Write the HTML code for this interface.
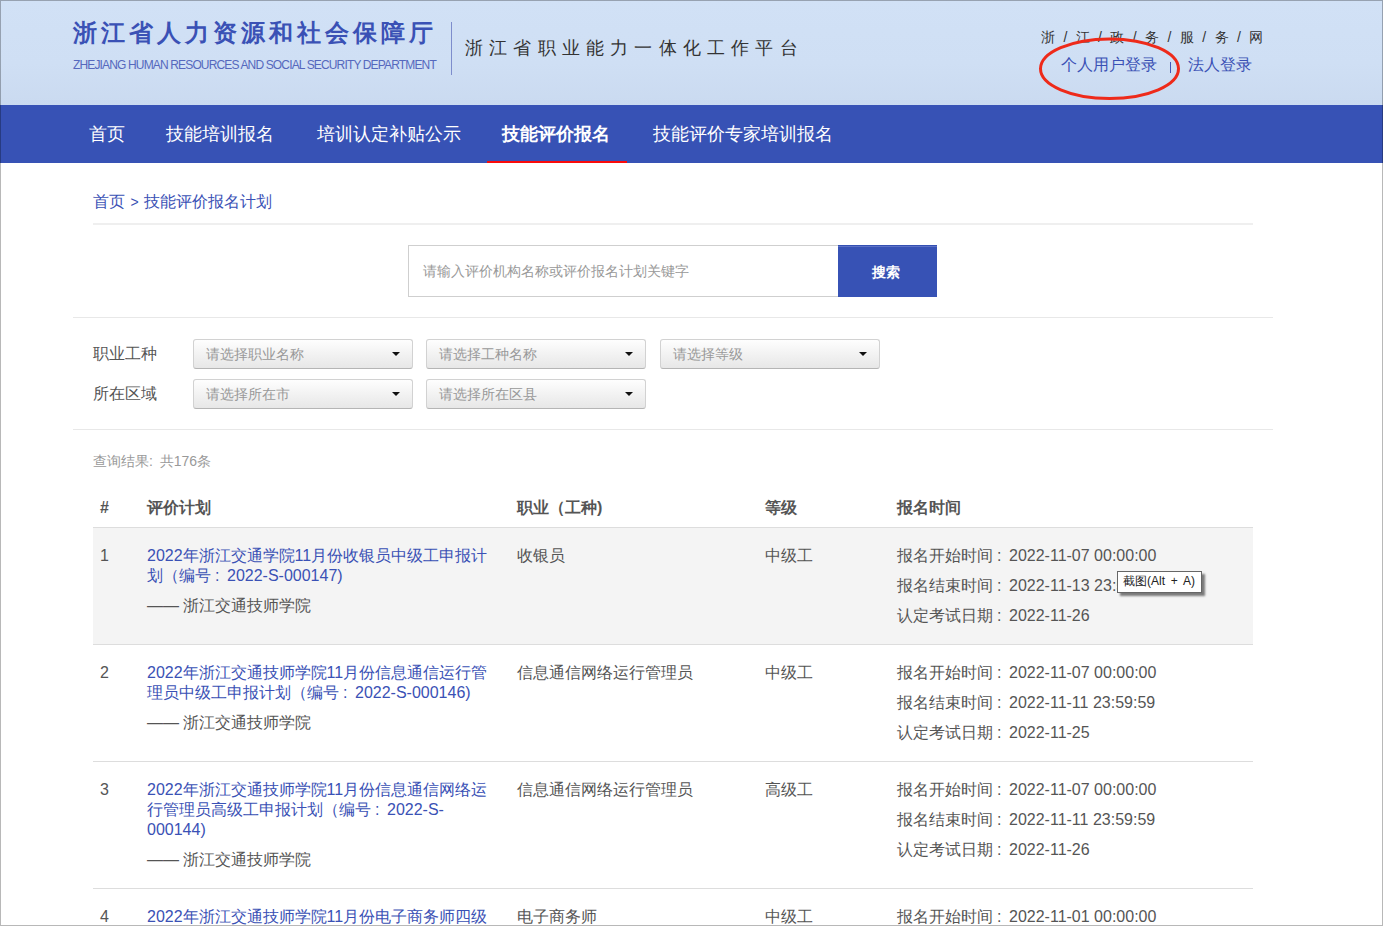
<!DOCTYPE html>
<html><head><meta charset="utf-8">
<style>
*{margin:0;padding:0;box-sizing:border-box}
html,body{width:1383px;height:926px;overflow:hidden;background:#fff}
body{font-family:"Liberation Sans",sans-serif;position:relative;color:#555}
.a{position:absolute;white-space:nowrap}
#frame{position:absolute;left:0;top:0;width:1383px;height:926px;border:1px solid rgba(0,0,0,.28);z-index:50;pointer-events:none}
#hdr{position:absolute;left:0;top:0;width:1383px;height:105px;background:linear-gradient(180deg,#d1e1f6 0%,#cfdff4 60%,#cadaf0 100%)}
#title{left:73px;top:18px;font-size:24px;font-weight:bold;letter-spacing:4px;color:#3a51b5;line-height:30px}
#eng{left:73px;top:58px;font-size:12px;letter-spacing:-0.85px;color:#5568bd;line-height:14px}
#vline{left:451px;top:22px;width:1px;height:53px;background:#7d8dcc}
#plat{left:465px;top:37px;font-size:18px;letter-spacing:6.2px;color:#333;line-height:22px}
#gov{left:1041px;top:28px;font-size:14px;color:#333;line-height:18px;letter-spacing:2.26px}
.login{top:55px;font-size:16px;color:#3a51b5;line-height:20px}
#nav{position:absolute;left:0;top:105px;width:1383px;height:58px;background:#3752b5}
.ni{position:absolute;top:13px;font-size:18px;color:#fff;line-height:32px}
#act{font-weight:bold}
#uline{left:487px;top:161px;width:140px;height:2px;background:#fa0a0a}
#bc{left:93px;top:192px;font-size:16px;color:#3a51b5;line-height:20px}
.hl{position:absolute;height:1px;background:#e8e8e8}
#sbox{left:408px;top:245px;width:431px;height:52px;border:1px solid #cfcfcf;background:#fff}
#sph{left:423px;top:262px;font-size:14px;color:#999;line-height:18px}
#sbtn{left:838px;top:245px;width:99px;height:52px;background:linear-gradient(#3450b3 0,#3450b3 1px,#5d72c6 1px,#5d72c6 2px,#3752b5 2px);color:#fff;font-size:14px;font-weight:bold;text-align:center;line-height:54px;text-indent:-3px}
.lab{font-size:16px;color:#555;line-height:20px}
.sel{position:absolute;width:220px;height:30px;border:1px solid #d2d2d2;border-bottom-color:#b5b5b5;border-radius:3px;background:linear-gradient(#fefefe,#e7e7e7);font-size:14px;color:#999;line-height:28px;padding-left:12px}
.sel:after{content:"";position:absolute;right:12px;top:12px;border-left:4px solid transparent;border-right:4px solid transparent;border-top:4px solid #111}
#res{left:93px;top:452px;font-size:14px;color:#999;word-spacing:3px;line-height:18px}
.th{position:absolute;top:497px;font-size:16px;font-weight:bold;color:#555;line-height:22px}
.row{position:absolute;left:93px;width:1160px}
.td{position:absolute;font-size:16px;line-height:20px;color:#555}
.lk{color:#3a51b5;white-space:normal;width:345px}
#tip{left:1117px;top:571px;width:85px;height:22px;background:#fff;border:1px solid #777;box-shadow:3px 3px 2px rgba(0,0,0,.5);font-size:12px;color:#222;line-height:19px;padding-left:5px;z-index:10;word-spacing:2.5px;border-color:#666}
#ell{z-index:20}
.c{display:inline-block;width:16px;padding-left:4px}
</style></head><body>
<div id="hdr"></div>
<div class="a" id="title">浙江省人力资源和社会保障厅</div>
<div class="a" id="eng">ZHEJIANG HUMAN RESOURCES AND SOCIAL SECURITY DEPARTMENT</div>
<div class="a" id="vline"></div>
<div class="a" id="plat">浙江省职业能力一体化工作平台</div>
<div class="a" id="gov">浙 / 江 / 政 / 务 / 服 / 务 / 网</div>
<div class="a login" style="left:1061px">个人用户登录</div><div class="a" style="left:1170px;top:62px;width:1px;height:11px;background:#4256b8"></div><div class="a login" style="left:1188px">法人登录</div>
<div id="nav">
<div class="ni" style="left:89px">首页</div>
<div class="ni" style="left:166px">技能培训报名</div>
<div class="ni" style="left:317px">培训认定补贴公示</div>
<div class="ni" id="act" style="left:502px">技能评价报名</div>
<div class="ni" style="left:653px">技能评价专家培训报名</div>
</div>
<div class="a" id="uline"></div>
<div class="a" id="bc">首页 <span style="font-size:14px;margin:0 1px">&gt;</span> 技能评价报名计划</div>
<div class="hl" style="left:93px;top:223px;width:1160px;height:2px;background:#efefef"></div>
<div class="a" id="sbox"></div>
<div class="a" id="sph">请输入评价机构名称或评价报名计划关键字</div>
<div class="a" id="sbtn">搜索</div>
<div class="hl" style="left:73px;top:317px;width:1200px"></div>
<div class="a lab" style="left:93px;top:344px">职业工种</div>
<div class="sel" style="left:193px;top:339px">请选择职业名称</div>
<div class="sel" style="left:426px;top:339px">请选择工种名称</div>
<div class="sel" style="left:660px;top:339px">请选择等级</div>
<div class="a lab" style="left:93px;top:384px">所在区域</div>
<div class="sel" style="left:193px;top:379px">请选择所在市</div>
<div class="sel" style="left:426px;top:379px">请选择所在区县</div>
<div class="hl" style="left:73px;top:429px;width:1200px"></div>
<div class="a" id="res">查询结果: 共176条</div>
<div class="th" style="left:100px">#</div>
<div class="th" style="left:147px">评价计划</div>
<div class="th" style="left:517px">职业（工种)</div>
<div class="th" style="left:765px">等级</div>
<div class="th" style="left:897px">报名时间</div>
<div class="hl" style="left:93px;top:527px;width:1160px;background:#ddd"></div>
<div class="row" style="top:528px;height:116px;background:#f4f4f4;"><div class="td" style="left:7px;top:18px">1</div><div class="td lk" style="left:54px;top:18px">2022年浙江交通学院11月份收银员中级工申报计<br>划（编号<span class="c">:</span>2022-S-000147)</div><div class="td au" style="left:54px;top:68px">—— 浙江交通技师学院</div><div class="td" style="left:424px;top:18px">收银员</div><div class="td" style="left:672px;top:18px">中级工</div><div class="td" style="left:804px;top:18px">报名开始时间<span class="c">:</span>2022-11-07 00:00:00</div><div class="td" style="left:804px;top:48px">报名结束时间<span class="c">:</span>2022-11-13 23:59:59</div><div class="td" style="left:804px;top:78px">认定考试日期<span class="c">:</span>2022-11-26</div></div><div class="hl" style="left:93px;top:644px;width:1160px;background:#ddd"></div>
<div class="row" style="top:645px;height:116px;"><div class="td" style="left:7px;top:18px">2</div><div class="td lk" style="left:54px;top:18px">2022年浙江交通技师学院11月份信息通信运行管<br>理员中级工申报计划（编号<span class="c">:</span>2022-S-000146)</div><div class="td au" style="left:54px;top:68px">—— 浙江交通技师学院</div><div class="td" style="left:424px;top:18px">信息通信网络运行管理员</div><div class="td" style="left:672px;top:18px">中级工</div><div class="td" style="left:804px;top:18px">报名开始时间<span class="c">:</span>2022-11-07 00:00:00</div><div class="td" style="left:804px;top:48px">报名结束时间<span class="c">:</span>2022-11-11 23:59:59</div><div class="td" style="left:804px;top:78px">认定考试日期<span class="c">:</span>2022-11-25</div></div><div class="hl" style="left:93px;top:761px;width:1160px;background:#ddd"></div>
<div class="row" style="top:762px;height:126px;"><div class="td" style="left:7px;top:18px">3</div><div class="td lk" style="left:54px;top:18px">2022年浙江交通技师学院11月份信息通信网络运<br>行管理员高级工申报计划（编号<span class="c">:</span>2022-S-<br>000144)</div><div class="td au" style="left:54px;top:88px">—— 浙江交通技师学院</div><div class="td" style="left:424px;top:18px">信息通信网络运行管理员</div><div class="td" style="left:672px;top:18px">高级工</div><div class="td" style="left:804px;top:18px">报名开始时间<span class="c">:</span>2022-11-07 00:00:00</div><div class="td" style="left:804px;top:48px">报名结束时间<span class="c">:</span>2022-11-11 23:59:59</div><div class="td" style="left:804px;top:78px">认定考试日期<span class="c">:</span>2022-11-26</div></div><div class="hl" style="left:93px;top:888px;width:1160px;background:#ddd"></div>
<div class="row" style="top:889px;height:116px;"><div class="td" style="left:7px;top:18px">4</div><div class="td lk" style="left:54px;top:18px">2022年浙江交通技师学院11月份电子商务师四级<br>x</div><div class="td au" style="left:54px;top:68px">—— 浙江交通技师学院</div><div class="td" style="left:424px;top:18px">电子商务师</div><div class="td" style="left:672px;top:18px">中级工</div><div class="td" style="left:804px;top:18px">报名开始时间<span class="c">:</span>2022-11-01 00:00:00</div><div class="td" style="left:804px;top:48px">报名结束时间<span class="c">:</span>x</div><div class="td" style="left:804px;top:78px">认定考试日期<span class="c">:</span>x</div></div><div class="hl" style="left:93px;top:1005px;width:1160px;background:#ddd"></div>
<div class="a" id="tip">截图(Alt + A)</div>
<svg class="a" id="ell" width="150" height="70" viewBox="0 0 150 70" style="left:1034px;top:32px"><ellipse cx="75.5" cy="36.8" rx="69" ry="29.8" fill="none" stroke="#ee2a1a" stroke-width="3"/></svg>
<div id="frame"></div>
</body></html>
